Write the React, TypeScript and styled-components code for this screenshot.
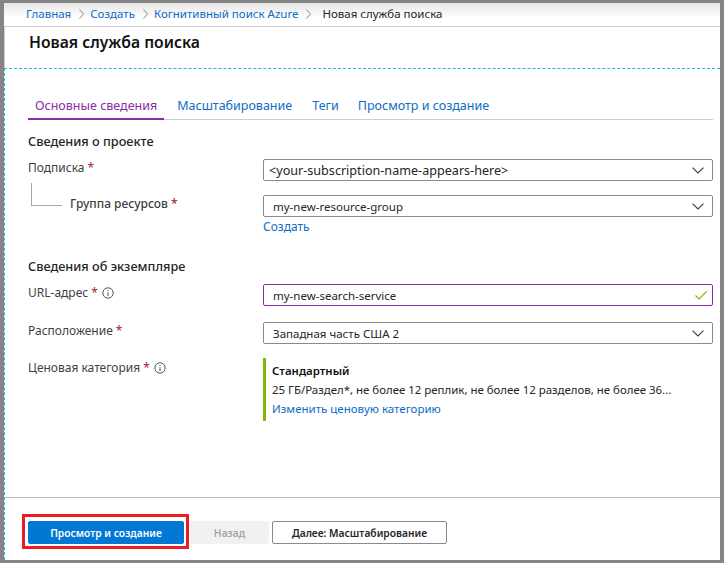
import React from 'react';
import styled, { createGlobalStyle } from 'styled-components';

const GlobalStyle = createGlobalStyle`
  html, body {
    margin: 0;
    padding: 0;
    background: #fff;
  }
  body {
    font-family: 'Noto Sans', 'Open Sans', 'Liberation Sans', sans-serif;
    font-size: 12px;
    color: #252525;
  }
  * {
    box-sizing: border-box;
  }
`;

const Frame = styled.div`
  width: 724px;
  height: 563px;
  display: flex;
  flex-direction: column;
  border-style: solid;
  border-color: #858585;
  border-width: 3px 4px 3px 4px;
  overflow: hidden;
`;

const Breadcrumbs = styled.nav`
  flex: none;
  height: 24px;
  display: flex;
  align-items: center;
  padding: 0 0 2px 22px;
  background: linear-gradient(#e6e6e6, #fff 65%);
  border-bottom: 1px solid #cfcfcf;
  font-size: 11.5px;
`;

const Crumb = styled.a`
  color: #0f6cc4;
`;

const CurrentCrumb = styled.span`
  color: #252525;
  margin-left: 5px;
`;

const CrumbSeparator = styled.svg`
  width: 5px;
  height: 10px;
  margin: 0 6px 0 8px;
  fill: none;
  stroke: #8a8a8a;
  stroke-width: 1;
`;

const TitleBar = styled.header`
  flex: none;
  height: 41px;
  padding: 4px 0 0 24px;
  border-left: 1px solid #cfcfcf;
`;

const Title = styled.h1`
  margin: 0;
  font-size: 15.7px;
  line-height: 22px;
  font-weight: 600;
  color: #111;
`;

const Content = styled.main`
  flex: 1;
  min-height: 0;
  display: flex;
  flex-direction: column;
  border-top: 1px dashed #1bb8e8;
  border-left: 1px dashed #1bb8e8;
`;

const Body = styled.div`
  flex: 1;
  min-height: 0;
  padding: 24px 7px 0 23px;
`;

const Tabs = styled.div`
  display: flex;
  height: 27px;
  border-bottom: 1px solid #cfcfcf;
`;

const Tab = styled.a<{ $active?: boolean }>`
  height: 27px;
  padding: 0 7px;
  margin-right: 6px;
  font-size: 12.5px;
  line-height: 26px;
  color: ${(p) => (p.$active ? '#8a2da5' : '#0f6cc4')};
  border-bottom: 2px solid ${(p) => (p.$active ? '#8a2da5' : 'transparent')};

  &:nth-child(3) {
    margin-right: 5px;
  }
`;

const SectionTitle = styled.h2<{ $top: number }>`
  margin: ${(p) => p.$top}px 0 0;
  font-size: 12.7px;
  line-height: 18px;
  font-weight: 500;
  color: #252525;
`;

const Row = styled.div<{ $top: number }>`
  display: grid;
  grid-template-columns: 235px 450px;
  margin-top: ${(p) => p.$top}px;
`;

const Label = styled.div<{ $nested?: boolean; $drop?: boolean }>`
  display: flex;
  align-items: center;
  height: 18px;
  margin-left: ${(p) => (p.$nested ? '42px' : '0')};
  margin-top: ${(p) => (p.$drop ? '1px' : '0')};
  font-size: 12px;
  line-height: 18px;
  color: #3f3f3f;
  font-weight: ${(p) => (p.$nested ? 500 : 400)};
`;

const Required = styled.span`
  margin-left: 3px;
  color: #a4262c;
`;

const InfoIcon = styled.svg`
  width: 12px;
  height: 12px;
  margin-left: 4px;
  fill: none;
  stroke: #555;
`;

const Field = styled.div<{ $valid?: boolean; $size?: number; $inset?: number }>`
  height: 22px;
  display: flex;
  align-items: center;
  justify-content: space-between;
  padding: 0 8px 0 ${(p) => p.$inset ?? 9}px;
  border-radius: 2px;
  border: 1px solid ${(p) => (p.$valid ? '#8a2da5' : '#8a8a8a')};
  background: #fff;
  font-size: ${(p) => p.$size ?? 11.5}px;
  color: #252525;
`;

const Chevron = styled.svg`
  width: 12px;
  height: 7px;
  fill: none;
  stroke: #3a3a3a;
  stroke-width: 1.1;
`;

const Check = styled.svg`
  width: 12px;
  height: 9px;
  margin-right: -3px;
  fill: none;
  stroke: #7fba00;
  stroke-width: 1.1;
`;

const TextLink = styled.a`
  display: block;
  color: #0f6cc4;
  font-size: 12px;
  line-height: 18px;
`;

const CreateLink = styled(TextLink)`
  margin-top: 1px;
`;

const TierLink = styled(TextLink)`
  font-size: 11.5px;
  line-height: 19px;
`;

const TreeRow = styled.div`
  position: relative;
`;

const TreeLine = styled.span`
  position: absolute;
  left: 3px;
  top: -12px;
  width: 31px;
  height: 23px;
  border-left: 1px solid #a6a6a6;
  border-bottom: 1px solid #a6a6a6;
`;

const Tier = styled.div`
  height: 63px;
  padding: 3px 0 0 6px;
  border-left: 3px solid #7fba00;
  font-size: 11.45px;
  line-height: 19px;
  color: #252525;
`;

const TierName = styled.div`
  font-weight: 600;
  color: #111;
`;

const Footer = styled.footer`
  flex: none;
  height: 63px;
  padding: 16px 0 0 17px;
  display: flex;
  align-items: flex-start;
  border-top: 1px solid #bdbdbd;
`;

const Highlight = styled.div`
  padding: 4px 2px 2px 3px;
  border: 3px solid #ed1c24;
  margin-right: 1px;
`;

const Button = styled.button<{ $kind: 'primary' | 'disabled' | 'outline' }>`
  height: 23px;
  padding: 0;
  display: block;
  border-radius: 2px;
  font-family: inherit;
  font-size: 10.25px;
  font-weight: 600;
  border: 1px solid
    ${(p) => (p.$kind === 'primary' ? '#0078d4' : p.$kind === 'disabled' ? '#f2f1f0' : '#8a8a8a')};
  background: ${(p) => (p.$kind === 'primary' ? '#0078d4' : p.$kind === 'disabled' ? '#f2f1f0' : '#fff')};
  color: ${(p) => (p.$kind === 'primary' ? '#fff' : p.$kind === 'disabled' ? '#a6a6a6' : '#252525')};
`;

const PrimaryButton = styled(Button)`
  width: 156px;
`;

const BackButton = styled(Button)`
  width: 79px;
  margin: 7px 3px 0 0;
`;

const NextButton = styled(Button)`
  width: 175px;
  margin-top: 7px;
`;

const Separator = () => (
  <CrumbSeparator viewBox="0 0 5 10">
    <path d="M0.5 0.5 L4.5 5 L0.5 9.5" />
  </CrumbSeparator>
);

const Info = () => (
  <InfoIcon viewBox="0 0 12 12">
    <circle cx="6" cy="6" r="5.2" />
    <path d="M6 5.2 V9 M6 3 V4.1" />
  </InfoIcon>
);

const Down = () => (
  <Chevron viewBox="0 0 12 7">
    <path d="M0.5 0.7 L6 6 L11.5 0.7" />
  </Chevron>
);

export default function App() {
  return (
    <>
      <GlobalStyle />
      <Frame>
        <Breadcrumbs>
          <Crumb>Главная</Crumb>
          <Separator />
          <Crumb>Создать</Crumb>
          <Separator />
          <Crumb>Когнитивный поиск Azure</Crumb>
          <Separator />
          <CurrentCrumb>Новая служба поиска</CurrentCrumb>
        </Breadcrumbs>
        <TitleBar>
          <Title>Новая служба поиска</Title>
        </TitleBar>
        <Content>
          <Body>
            <Tabs>
              <Tab $active>Основные сведения</Tab>
              <Tab>Масштабирование</Tab>
              <Tab>Теги</Tab>
              <Tab>Просмотр и создание</Tab>
            </Tabs>
            <SectionTitle $top={12}>Сведения о проекте</SectionTitle>
            <Row $top={9}>
              <Label>
                Подписка<Required>*</Required>
              </Label>
              <Field $size={12.6} $inset={5}>
                {'<your-subscription-name-appears-here>'}
                <Down />
              </Field>
            </Row>
            <Row $top={14}>
              <TreeRow>
                <TreeLine />
                <Label $nested>
                  Группа ресурсов<Required>*</Required>
                </Label>
              </TreeRow>
              <div>
                <Field>
                  my-new-resource-group
                  <Down />
                </Field>
                <CreateLink>Создать</CreateLink>
              </div>
            </Row>
            <SectionTitle $top={21}>Сведения об экземпляре</SectionTitle>
            <Row $top={9}>
              <Label>
                URL-адрес<Required>*</Required>
                <Info />
              </Label>
              <Field $valid>
                my-new-search-service
                <Check viewBox="0 0 12 9">
                  <path d="M0.5 4.5 L4 8 L11.5 0.5" />
                </Check>
              </Field>
            </Row>
            <Row $top={16}>
              <Label>
                Расположение<Required>*</Required>
              </Label>
              <Field>
                Западная часть США 2
                <Down />
              </Field>
            </Row>
            <Row $top={14}>
              <Label $drop>
                Ценовая категория<Required>*</Required>
                <Info />
              </Label>
              <Tier>
                <TierName>Стандартный</TierName>
                <div>25 ГБ/Раздел*, не более 12 реплик, не более 12 разделов, не более 36...</div>
                <TierLink>Изменить ценовую категорию</TierLink>
              </Tier>
            </Row>
          </Body>
          <Footer>
            <Highlight>
              <PrimaryButton $kind="primary">Просмотр и создание</PrimaryButton>
            </Highlight>
            <BackButton $kind="disabled">Назад</BackButton>
            <NextButton $kind="outline">Далее: Масштабирование</NextButton>
          </Footer>
        </Content>
      </Frame>
    </>
  );
}
